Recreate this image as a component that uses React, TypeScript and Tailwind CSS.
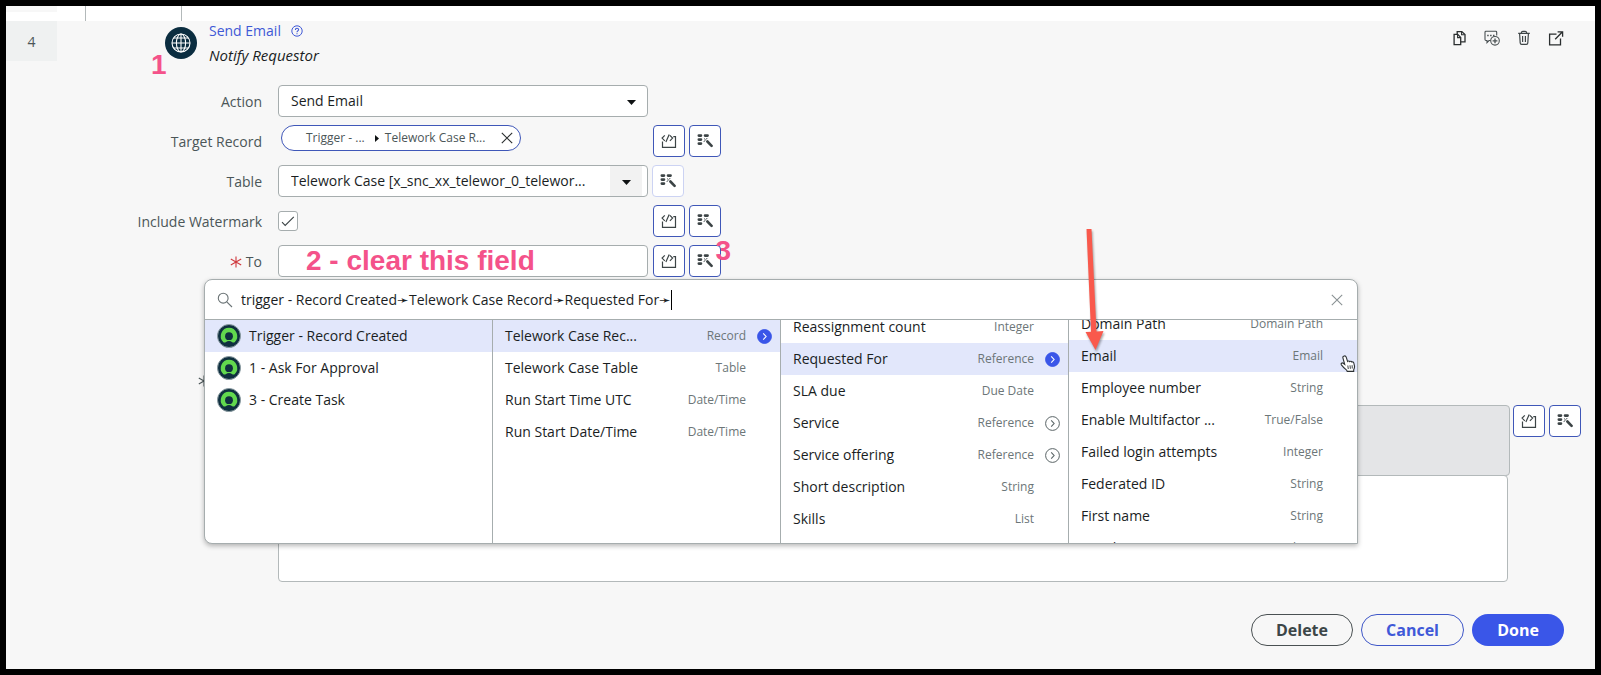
import { type ReactNode } from "react";

type Item = {
  name: string;
  type?: string;
  selected?: boolean;
  nested?: boolean;
};

const steps: Item[] = [
  { name: "Trigger - Record Created", selected: true },
  { name: "1 - Ask For Approval" },
  { name: "3 - Create Task" },
];

const outputs: Item[] = [
  { name: "Telework Case Rec...", type: "Record", selected: true, nested: true },
  { name: "Telework Case Table", type: "Table" },
  { name: "Run Start Time UTC", type: "Date/Time" },
  { name: "Run Start Date/Time", type: "Date/Time" },
];

const caseFields: Item[] = [
  { name: "Reassignment count", type: "Integer" },
  { name: "Requested For", type: "Reference", selected: true, nested: true },
  { name: "SLA due", type: "Due Date" },
  { name: "Service", type: "Reference", nested: true },
  { name: "Service offering", type: "Reference", nested: true },
  { name: "Short description", type: "String" },
  { name: "Skills", type: "List" },
];

const userFields: Item[] = [
  { name: "Domain Path", type: "Domain Path" },
  { name: "Email", type: "Email", selected: true },
  { name: "Employee number", type: "String" },
  { name: "Enable Multifactor ...", type: "True/False" },
  { name: "Failed login attempts", type: "Integer" },
  { name: "Federated ID", type: "String" },
  { name: "First name", type: "String" },
  { name: "Gender", type: "Choice" },
];

function GlobeIcon() {
  return (
    <svg className="size-8" viewBox="0 0 32 32" fill="none" aria-hidden="true">
      <circle cx="16" cy="16" r="16" fill="#0b2d40" />
      <g stroke="#fff" strokeWidth="1.1">
        <circle cx="16" cy="16" r="9" />
        <ellipse cx="16" cy="16" rx="4.6" ry="9" />
        <path d="M16 7v18M7 16h18M8.6 11h14.8M8.6 21h14.8" />
      </g>
    </svg>
  );
}

function HelpIcon() {
  return (
    <svg className="size-3" viewBox="0 0 12 12" fill="none" stroke="#4059d6" aria-hidden="true">
      <circle cx="6" cy="6" r="5.2" />
      <path d="M4.4 4.9c0-2.2 3.2-2.2 3.2-.2 0 1.2-1.6 1.2-1.6 2.5M6 8.2v1.1" strokeWidth="1.1" />
    </svg>
  );
}

function CopyIcon() {
  return (
    <svg className="size-4" viewBox="0 0 16 16" fill="none" stroke="#2a2e2f" strokeWidth="1.3" aria-hidden="true">
      <path d="M2.1 4.4h3.6l3 3v7.2H2.1z" />
      <path d="M5.2 4.2V1.6h4.6l3.2 3v7.2H8.9" />
      <path d="M5.6 4.6v3h3M9.6 1.8v3h3" strokeWidth="1.1" />
    </svg>
  );
}

function CommentAddIcon() {
  return (
    <svg className="size-4" viewBox="0 0 16 16" fill="none" stroke="#4a5153" strokeWidth="1.1" aria-hidden="true">
      <path d="M6.6 10.5H5L3 12.6v-2.1H1.9q-.9 0-.9-.9V2.2q0-.9.9-.9h9.9q.9 0 .9.9v3.4" />
      <path d="M3.2 5.6h1.5M6.1 5.6h1.5M9 5.6h1.5" strokeWidth="1.5" />
      <circle cx="11" cy="10.8" r="4.3" />
      <path d="M11 8.4v4.8M8.6 10.8h4.8" strokeWidth="1.3" />
    </svg>
  );
}

function TrashIcon() {
  return (
    <svg className="size-4" viewBox="0 0 16 16" fill="none" stroke="#3f4648" strokeWidth="1.2" aria-hidden="true">
      <path d="M2.2 3.4h11.6M5.2 3.2q.3-1.8 1.6-1.8h2.4q1.3 0 1.6 1.8M3.6 3.6l.6 9.4q.1 1.3 1.4 1.3h4.8q1.3 0 1.4-1.3l.6-9.4M6.6 6v6M9.4 6v6" />
    </svg>
  );
}

function ExternalIcon() {
  return (
    <svg className="size-4" viewBox="0 0 16 16" fill="none" stroke="#2a2e2f" strokeWidth="1.3" aria-hidden="true">
      <path d="M8.5 4.1H1.6v10.8h10.9V8.4M7.2 9.2l6.8-7M9.6 1.8h5v5" />
    </svg>
  );
}

function ScriptIcon() {
  return (
    <svg className="size-4" viewBox="0 0 16 16" fill="none" stroke="#3c4446" strokeWidth="1.2" aria-hidden="true">
      <path d="M1.5 8.5v5.9h13V3.6h-2.2" />
      <path d="M3.8 2.4 1.1 5.1l2.7 2.7M8.2 1.5 4.9 9M8.9 2.4l2.7 2.7-2.7 2.7" />
    </svg>
  );
}

function PickerIcon() {
  return (
    <svg className="size-4" viewBox="0 0 16 16" fill="none" stroke="#3c4446" strokeLinecap="round" aria-hidden="true">
      <path d="M1.8 2.6H4M8 2.6h2.6M1.8 6.6H4M1.8 10.6H4" strokeWidth="2.6" />
      <path d="M10.4 8.5 14.6 12.8" strokeWidth="2.6" />
      <path d="M7.4 5.8l1 1M9.9 5.4l-.5.7M7 8.3l.8-.4" strokeWidth="1" />
    </svg>
  );
}

function CloseIcon() {
  return (
    <svg className="size-3" viewBox="0 0 12 12" fill="none" stroke="currentColor" strokeWidth="1.1" aria-hidden="true">
      <path d="M.8.8l10.4 10.4M11.2.8.8 11.2" />
    </svg>
  );
}

function SearchIcon() {
  return (
    <svg className="size-4" viewBox="0 0 16 16" fill="none" stroke="#6a7375" strokeWidth="1.1" aria-hidden="true">
      <circle cx="6.2" cy="6.2" r="4.9" />
      <path d="m9.8 9.8 5.2 5.2" />
    </svg>
  );
}

function CaretIcon() {
  return (
    <svg className="h-[5px] w-[9px]" viewBox="0 0 9 5" aria-hidden="true">
      <path d="M0 0h9L4.5 5z" fill="#0f1213" />
    </svg>
  );
}

function StepIcon() {
  return (
    <svg className="size-6 shrink-0" viewBox="0 0 24 24" aria-hidden="true">
      <circle cx="12" cy="12" r="11.5" fill="#0f2f3f" stroke="#8d9da3" />
      <path
        d="M12 3.8a8.3 8.3 0 0 0-5.8 14.2c.7.7 1.7.7 2.5.2a5.8 5.8 0 0 1 6.6 0c.8.5 1.8.5 2.5-.2A8.3 8.3 0 0 0 12 3.8z"
        fill="#62d84e"
      />
      <circle cx="12" cy="12.2" r="3.9" fill="#0f2f3f" />
    </svg>
  );
}

function DrillIcon({ active }: { active?: boolean }) {
  return (
    <svg className="size-[15px]" viewBox="0 0 15 15" fill="none" aria-hidden="true">
      <circle cx="7.5" cy="7.5" r="6.9" fill={active ? "#3a56e8" : "none"} stroke={active ? "#3a56e8" : "#5a6466"} />
      <path d="m6.2 4.3 2.9 3.2-2.9 3.2" stroke={active ? "#fff" : "#5a6466"} strokeWidth="1.1" />
    </svg>
  );
}

function RequiredMark({ className }: { className: string }) {
  return (
    <svg className={className} viewBox="0 0 12 12" fill="none" stroke="currentColor" strokeWidth="1.1" role="img" aria-label="Required">
      <path d="M6 .6v10.8M.8 3l10.4 6M11.2 3 .8 9" />
    </svg>
  );
}

function ToolButton({ label, muted, children }: { label: string; muted?: boolean; children: ReactNode }) {
  return (
    <button
      type="button"
      aria-label={label}
      className={
        "flex size-8 shrink-0 items-center justify-center rounded border bg-white " +
        (muted ? "border-[#ccd3f3]" : "border-[#3f57b8]")
      }
    >
      {children}
    </button>
  );
}

function ToolPair() {
  return (
    <div className="flex gap-1 pl-[5px]">
      <ToolButton label="Toggle scripting">
        <ScriptIcon />
      </ToolButton>
      <ToolButton label="Pick data pill">
        <PickerIcon />
      </ToolButton>
    </div>
  );
}

function Row({ label, htmlFor, required, children }: { label: string; htmlFor: string; required?: boolean; children: ReactNode }) {
  return (
    <div className="flex h-8">
      <div className="flex w-[256px] shrink-0 items-center justify-end gap-1 pt-0.5 text-[#4b5658]">
        {required && <RequiredMark className="size-3 text-[#d0393e]" />}
        <label htmlFor={htmlFor}>{label}</label>
      </div>
      <div className="flex grow pl-4">{children}</div>
    </div>
  );
}

function Column({ title, items, shift, icons }: { title: string; items: Item[]; shift?: string; icons?: boolean }) {
  return (
    <div className="min-w-0 overflow-hidden border-r border-[#a6adae] last:border-r-0">
      <ul aria-label={title} className={shift}>
        {items.map((item) => (
          <li key={item.name}>
            <button
              type="button"
              className={
                "flex h-8 w-full items-center gap-2 pl-3 pr-2 text-left " + (item.selected ? "bg-[#e2e7fb]" : "bg-white")
              }
            >
              {icons && <StepIcon />}
              <span className="grow whitespace-nowrap text-[#1a1e1f]">{item.name}</span>
              {item.type && <span className="whitespace-nowrap text-xs text-[#6c7678]">{item.type}</span>}
              {item.type && (
                <span className="flex w-[18px] shrink-0 justify-center pl-0.5">{item.nested && <DrillIcon active={item.selected} />}</span>
              )}
            </button>
          </li>
        ))}
      </ul>
    </div>
  );
}

function DataPicker() {
  return (
    <div
      role="dialog"
      aria-label="Data picker"
      className="absolute left-[198px] right-[237px] top-[194px] z-10 rounded-lg rounded-br-none border border-[#a6adae] bg-white shadow-[0_2px_5px_rgba(0,0,0,0.28)]"
    >
      <div className="flex h-10 items-center border-b border-[#a6adae] pl-3 pr-3.5">
        <SearchIcon />
        <input
          aria-label="Search data"
          defaultValue="trigger - Record Created➛Telework Case Record➛Requested For➛"
          className="field-sizing-content ml-2 bg-transparent text-[#1a1e1f] outline-none"
        />
        <span className="h-5 w-px bg-black" />
        <button type="button" aria-label="Close" className="ml-auto text-[#8a9294]">
          <CloseIcon />
        </button>
      </div>
      <div className="grid h-[223px] grid-cols-4 overflow-hidden rounded-bl-lg">
        <Column title="Steps" items={steps} icons />
        <Column title="Outputs" items={outputs} />
        <Column title="Case fields" items={caseFields} shift="-mt-[9px]" />
        <Column title="User fields" items={userFields} shift="-mt-3" />
      </div>
      <svg className="absolute left-[876px] top-[-54px] h-[130px] w-8 drop-shadow-[1px_2px_1px_rgba(0,0,0,0.35)]" viewBox="0 0 32 130" aria-hidden="true">
        <path d="M5.500 3h5l5 102.500 7-.5L14.500 124 4.500 106l5.500-.3z" fill="#f9594c" />
      </svg>
      <svg className="absolute right-px top-[75px] h-[18px] w-4" viewBox="0 0 16 18" aria-hidden="true">
        <path
          d="M4.200 1c1.100-.3 1.700.3 2 1.200l1.400 4.200c.7-.7 1.700-.5 2.100.2.800-.6 1.700-.3 2.100.4.900-.4 1.800.1 2 1l.7 3.200c.2 1.600-.3 2.600-.8 3.600v1.600H7.200l-.6-1.300c-1.800-1.300-3.600-3.200-5.200-5.300-.8-1.200.6-2.400 1.800-1.600l1.500 1.100L2.900 2.800C2.700 2 3.200 1.200 4.200 1z"
          fill="#fff"
          stroke="#2c3133"
          strokeWidth="1.1"
        />
        <path d="M7.800 10.500l.5 3.500M10 10.300l.4 3.500M12.100 10.200l.2 3.300" stroke="#2c3133" strokeWidth=".9" />
      </svg>
    </div>
  );
}

function Note({ className, children }: { className: string; children: ReactNode }) {
  return (
    <span
      className={
        "pointer-events-none absolute z-20 whitespace-nowrap font-['Liberation_Sans',Arial,sans-serif] text-[28px] font-bold leading-7 text-[#f4528a] " +
        className
      }
    >
      {children}
    </span>
  );
}

const fieldClass = "w-[370px] rounded border border-[#a6adae] bg-white";

export default function App() {
  return (
    <main className="flex min-h-screen flex-col border-[6px] border-black bg-[#f7f7f7] font-['Open_Sans','Noto_Sans',sans-serif] text-sm text-[#1a1e1f]">
      <div className="flex h-[15px] bg-white">
        <div className="h-1.5 w-[51px] bg-[#f7f7f7]" />
        <div className="ml-7 w-[97px] border-x border-[#b3b9ba]" />
      </div>

      <header className="relative flex">
        <div className="flex h-10 w-[51px] items-center justify-center bg-[#eff1f1] pt-0.5 text-[#4b5658]">4</div>
        <div className="ml-[108px] pt-1.5">
          <GlobeIcon />
        </div>
        <div className="ml-3">
          <div className="flex h-5 items-center gap-2.5">
            <a href="#send-email" className="text-[#4059d6]">
              Send Email
            </a>
            <button type="button" aria-label="Help">
              <HelpIcon />
            </button>
          </div>
          <p className="mt-1 text-[15px] leading-5 italic">Notify Requestor</p>
        </div>
        <div className="ml-auto flex h-8 items-center gap-4 pr-[31px] pt-0.5">
          <button type="button" aria-label="Duplicate">
            <CopyIcon />
          </button>
          <button type="button" aria-label="Add comment">
            <CommentAddIcon />
          </button>
          <button type="button" aria-label="Delete step">
            <TrashIcon />
          </button>
          <button type="button" aria-label="Open in new window">
            <ExternalIcon />
          </button>
        </div>
        <Note className="left-[145px] top-[30px]">1</Note>
      </header>

      <form className="relative mt-5 flex flex-col gap-2" onSubmit={(e) => e.preventDefault()}>
        <Row label="Action" htmlFor="action">
          <div className="relative">
            <select id="action" className={fieldClass + " h-8 appearance-none px-3"}>
              <option>Send Email</option>
            </select>
            <span className="pointer-events-none absolute inset-y-0 right-3 flex items-center pt-0.5">
              <CaretIcon />
            </span>
          </div>
        </Row>

        <Row label="Target Record" htmlFor="target">
          <div className="flex w-[370px] items-start pl-[3px]">
            <div className="flex h-[26px] w-60 items-center rounded-full border border-[#3f57b8] bg-white pl-6 pr-[7px] text-xs text-[#4b5658]">
              <span>Trigger - ...</span>
              <svg className="ml-2.5 mr-1.5 h-[7px] w-1" viewBox="0 0 4 7" aria-hidden="true">
                <path d="M0 0l4 3.5L0 7z" fill="#0f1213" />
              </svg>
              <span>Telework Case R...</span>
              <button id="target" type="button" aria-label="Remove target record" className="ml-auto text-[#2a2e2f]">
                <CloseIcon />
              </button>
            </div>
          </div>
          <ToolPair />
        </Row>

        <Row label="Table" htmlFor="table">
          <div className="relative">
            <select id="table" className={fieldClass + " h-8 appearance-none px-3"}>
              <option>Telework Case [x_snc_xx_telewor_0_telewor...</option>
            </select>
            <span className="pointer-events-none absolute inset-y-px right-1.5 flex w-8 items-center justify-center bg-[#f2f2f2] pt-0.5">
              <CaretIcon />
            </span>
          </div>
          <div className="pl-1">
            <ToolButton label="Pick data pill" muted>
              <PickerIcon />
            </ToolButton>
          </div>
        </Row>

        <Row label="Include Watermark" htmlFor="watermark">
          <div className="flex w-[370px] items-center">
            <span className="relative flex size-5">
              <input
                id="watermark"
                type="checkbox"
                defaultChecked
                className="size-5 appearance-none rounded-[3px] border border-[#a6adae] bg-white"
              />
              <svg className="pointer-events-none absolute inset-0 size-5" viewBox="0 0 20 20" fill="none" stroke="#3c4446" strokeWidth="1.1" aria-hidden="true">
                <path d="m4 11.2 3.2 3.2 8.6-8.6" />
              </svg>
            </span>
          </div>
          <ToolPair />
        </Row>

        <Row label="To" htmlFor="to" required>
          <div className="relative">
            <input id="to" type="text" className={fieldClass + " h-8 px-3"} />
            <Note className="left-7 top-0.5">2 - clear this field</Note>
          </div>
          <div className="relative">
            <ToolPair />
            <Note className="-right-2.5 -top-2">3</Note>
          </div>
        </Row>

        <div className="flex h-28 items-end">
          <div className="flex h-[22px] w-[204px] items-start justify-end">
            <RequiredMark className="size-3 text-[#4b5658]" />
          </div>
        </div>

        <div className="flex items-start pl-[272px] pr-3.5">
          <div className="min-w-0 grow">
            <div className="h-[71px] rounded border border-[#b3b9ba] bg-[#e4e5e7]" />
            <div className="-mt-px pr-0.5">
              <textarea aria-label="Body" className="block h-[107px] w-full resize-none rounded border border-[#b3b9ba] bg-white p-3" />
            </div>
          </div>
          <div className="-ml-0.5">
            <ToolPair />
          </div>
        </div>

        <DataPicker />
      </form>

      <footer className="mt-8 flex justify-end gap-2 pb-[23px] pr-[31px] text-base font-bold">
        <button type="button" className="h-8 w-[102px] rounded-full border border-[#4a5153] text-[#3c4648]">
          Delete
        </button>
        <button type="button" className="h-8 w-[103px] rounded-full border border-[#3f57c8] text-[#3f59d8]">
          Cancel
        </button>
        <button type="button" className="h-8 w-[92px] rounded-full bg-[#3a56e8] text-white">
          Done
        </button>
      </footer>
    </main>
  );
}
